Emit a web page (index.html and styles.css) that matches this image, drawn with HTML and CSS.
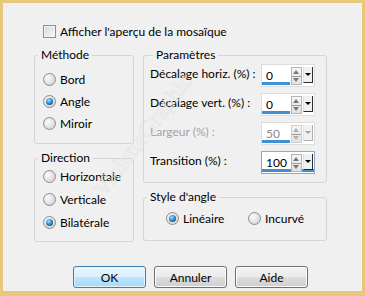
FILE: index.html
```html
<!DOCTYPE html>
<html lang="fr">
<head>
  <meta charset="UTF-8">
  <link rel="stylesheet" href="styles.css">
  <title>Mosaïque</title>
</head>
<body>
  <div class="frame">
    <label class="check-row"><span class="checkbox"></span>Afficher l'aperçu de la mosaïque</label>

    <div class="columns">
      <div class="col-left">
        <fieldset class="group method">
          <legend>Méthode</legend>
          <div class="option"><span class="radio"></span>Bord</div>
          <div class="option"><span class="radio on"></span>Angle</div>
          <div class="option"><span class="radio"></span>Miroir</div>
        </fieldset>
        <fieldset class="group direction">
          <legend>Direction</legend>
          <div class="option"><span class="radio"></span>Horizontale</div>
          <div class="option"><span class="radio"></span>Verticale</div>
          <div class="option"><span class="radio on"></span>Bilatérale</div>
        </fieldset>
      </div>

      <div class="col-right">
        <fieldset class="group params">
          <legend>Paramètres</legend>
          <div class="field">
            <span class="label">Décalage horiz. (%) :</span>
            <div class="spin"><span class="value">0</span><span class="bar"></span><span class="arrows"><i class="up"></i><i class="down"></i></span><span class="drop"></span></div>
          </div>
          <div class="field">
            <span class="label">Décalage vert. (%) :</span>
            <div class="spin"><span class="value">0</span><span class="bar"></span><span class="arrows"><i class="up"></i><i class="down"></i></span><span class="drop"></span></div>
          </div>
          <div class="field disabled">
            <span class="label">Largeur (%) :</span>
            <div class="spin"><span class="value">50</span><span class="bar"></span><span class="arrows"><i class="up"></i><i class="down"></i></span><span class="drop"></span></div>
          </div>
          <div class="field">
            <span class="label">Transition (%) :</span>
            <div class="spin focus"><span class="value">100</span><span class="bar"></span><span class="arrows"><i class="up"></i><i class="down"></i></span><span class="drop"></span></div>
          </div>
        </fieldset>
        <fieldset class="group style">
          <legend>Style d'angle</legend>
          <div class="inline-options">
            <div class="option"><span class="radio on"></span>Linéaire</div>
            <div class="option"><span class="radio"></span>Incurvé</div>
          </div>
        </fieldset>
      </div>
    </div>

    <div class="buttons">
      <button class="default">OK</button>
      <button>Annuler</button>
      <button>Aide</button>
    </div>

    <span class="watermark">VioletteGraphic</span>
  </div>
</body>
</html>
```

FILE: styles.css
```css
body {
  margin: 0;
  font-family: Lato, "Noto Sans", sans-serif;
  font-size: 12px;
  color: #000;
}

.frame {
  position: relative;
  width: 365px;
  height: 296px;
  box-sizing: border-box;
  border: 3px solid #e8c87c;
  border-bottom-width: 5px;
  background-color: #f0f0f0;
  padding: 22px 0 0 31px;
  overflow: hidden;
}

.check-row {
  display: flex;
  align-items: center;
  height: 13px;
  margin-left: 9px;
  line-height: 13px;
  white-space: nowrap;
}

.checkbox {
  width: 11px;
  height: 11px;
  border: 1px solid #8e8f8f;
  background: linear-gradient(135deg, #d8d8d8, #f7f7f7);
  box-shadow: inset 0 0 0 1px #f4f4f4;
  margin-right: 4px;
}

.columns {
  display: flex;
  gap: 9px;
  margin-top: 10px;
}

.col-left {
  display: flex;
  flex-direction: column;
  gap: 7px;
  width: 100px;
}

.col-right {
  display: flex;
  flex-direction: column;
  gap: 7px;
  width: 184px;
}

.group {
  margin: 0;
  padding: 0;
  border: 1px solid #d5d5d5;
  border-radius: 3px;
  box-sizing: border-box;
  min-width: 0;
}

.group legend {
  margin-left: 3px;
  padding: 0 3px;
  line-height: 14px;
}

.method { height: 96px; padding-top: 6px; }
.direction { height: 91px; padding-top: 0; }
.params { height: 135px; padding: 2px 11px 0 6px; }
.style { height: 51px; padding-top: 3px; }

.option {
  display: flex;
  align-items: center;
  height: 22px;
  padding-left: 8px;
  white-space: nowrap;
}

.direction .option { height: 23px; }

.radio {
  position: relative;
  width: 11px;
  height: 11px;
  border: 1px solid #8c8c8c;
  border-radius: 50%;
  background: radial-gradient(circle at 35% 35%, #fbfbfb, #dadada 70%, #cfcfcf);
  margin-right: 4px;
  flex: none;
}

.radio.on::after {
  content: "";
  position: absolute;
  left: 2px;
  top: 2px;
  width: 7px;
  height: 7px;
  border-radius: 50%;
  background: radial-gradient(circle at 40% 35%, #a8e4ff, #2f8ed0 45%, #0b3f73 90%);
}

.inline-options {
  display: flex;
  padding-left: 14px;
}

.inline-options .option:first-child { width: 74px; }

.field {
  display: flex;
  align-items: center;
  justify-content: space-between;
  height: 23px;
  margin-bottom: 6px;
}

.field .label {
  padding-bottom: 4px;
  white-space: nowrap;
}

.field.disabled .label { color: #a3a3a3; }

.spin {
  position: relative;
  flex: none;
  width: 54px;
  height: 23px;
  box-sizing: border-box;
  border: 1px solid #dcdcdc;
  background: #fff;
}

.spin.focus { border-color: #8fa8c8; }

.spin .value {
  position: absolute;
  left: 4px;
  top: 4px;
  line-height: 14px;
}

.disabled .spin .value { color: #8a8a8a; }

.spin .bar {
  position: absolute;
  left: 0;
  bottom: 1px;
  width: 28px;
  height: 3px;
  background: #3f8fd4;
}

.spin.focus .bar { width: 52px; }

.spin .arrows {
  position: absolute;
  left: 29px;
  top: 2px;
  width: 9px;
  height: 16px;
  border: 1px solid #b5b5b5;
  background: linear-gradient(#f6f6f6, #e2e2e2);
  display: flex;
  flex-direction: column;
}

.arrows i {
  flex: 1;
  position: relative;
}

.arrows .up { border-bottom: 1px solid #9a9a9a; }

.arrows i::after {
  content: "";
  position: absolute;
  left: 1px;
  top: 2px;
  border-left: 3.5px solid transparent;
  border-right: 3.5px solid transparent;
}

.arrows .up::after { border-bottom: 4px solid #777; }
.arrows .down::after { border-top: 4px solid #777; top: 1px; }

.spin .drop {
  position: absolute;
  left: 41px;
  top: 2px;
  width: 8px;
  height: 15px;
  background: #f0f0f0;
  border-right: 1px solid #2b2b2b;
  border-bottom: 1px solid #2b2b2b;
  border-left: 1px solid #e0e0e0;
}

.spin .drop::after {
  content: "";
  position: absolute;
  left: 1px;
  top: 6px;
  border-left: 3px solid transparent;
  border-right: 3px solid transparent;
  border-top: 3px solid #000;
}

.disabled .arrows { border-color: #cfcfcf; }
.disabled .arrows .up::after { border-bottom-color: #b0b0b0; }
.disabled .arrows .down::after { border-top-color: #b0b0b0; }
.disabled .drop { border-right-color: #b0b0b0; border-bottom-color: #b0b0b0; }
.disabled .drop::after { border-top-color: #a0a0a0; }

.buttons {
  display: flex;
  gap: 8px;
  margin: 24px 0 0 39px;
}

button {
  width: 73px;
  height: 22px;
  padding: 0;
  font-family: inherit;
  font-size: 12px;
  color: #000;
  border: 1px solid #707070;
  border-radius: 3px;
  background: linear-gradient(#f2f2f2, #ebebeb 50%, #dddddd 50%, #cfcfcf);
  box-shadow: inset 0 0 0 1px #fcfcfc;
}

button.default {
  border-color: #3c7fb1;
  background: linear-gradient(#eaf6fd, #d9f0fc 50%, #bee6fd 50%, #a7d9f5);
  box-shadow: inset 0 0 0 1px #e6f4fc;
}

.watermark {
  position: absolute;
  left: 96px;
  top: 178px;
  font-family: "Liberation Serif", serif;
  font-size: 23px;
  color: transparent;
  -webkit-text-stroke: 0.5px #e2e2e2;
  transform: rotate(-53deg);
  transform-origin: left center;
  white-space: nowrap;
  pointer-events: none;
}
```
